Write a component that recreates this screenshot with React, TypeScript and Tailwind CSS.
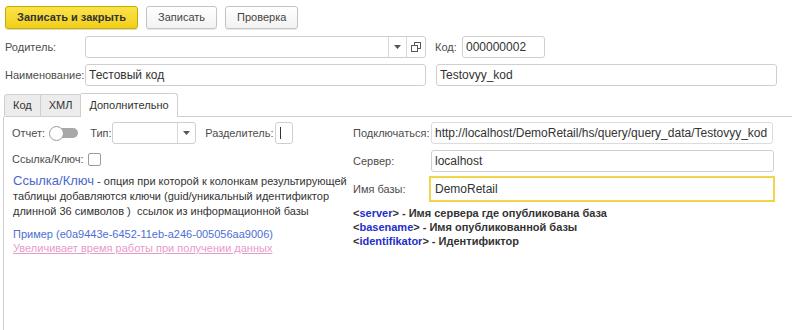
import React from 'react'

function Btn({ children, primary }: { children: React.ReactNode; primary?: boolean }) {
  return (
    <button
      className={
        primary
          ? 'h-[23px] px-[11px] rounded-[3px] border border-[#c9ab00] bg-gradient-to-b from-[#fbe34a] to-[#f1cf10] text-[11px] font-bold text-[#333] shadow-[0_1px_1px_rgba(0,0,0,0.15)]'
          : 'h-[23px] px-[11px] rounded-[3px] border border-[#c4c4c4] bg-gradient-to-b from-white to-[#f2f2f2] text-[11px] text-[#444] shadow-[0_1px_1px_rgba(0,0,0,0.1)]'
      }
    >
      {children}
    </button>
  )
}

function Field({ value, className }: { value?: string; className: string }) {
  return (
    <div
      className={`flex items-center h-[22px] px-[3px] rounded-[3px] border border-[#cfcfcf] bg-white text-[#333] whitespace-nowrap overflow-hidden ${className}`}
    >
      {value}
    </div>
  )
}

function Arrow() {
  return (
    <svg width="7" height="4" viewBox="0 0 7 4">
      <path d="M0 0h7L3.5 4z" fill="#555" />
    </svg>
  )
}

export default function App() {
  return (
    <div className="w-[792px] h-[330px] bg-white overflow-hidden font-['Liberation_Sans',Arial,sans-serif] text-[11px] text-[#333]">
      {/* toolbar */}
      <div className="flex items-center gap-[8px] pl-[5px] pt-[6px]">
        <Btn primary>Записать и закрыть</Btn>
        <Btn>Записать</Btn>
        <Btn>Проверка</Btn>
      </div>

      {/* Родитель */}
      <div className="flex items-center mt-[7px] h-[22px]">
        <span className="w-[85px] pl-[5px] text-[#4d4d4d]">Родитель:</span>
        <div className="flex w-[341px] h-[22px] rounded-[3px] border border-[#cfcfcf] bg-white">
          <div className="flex-1" />
          <div className="w-[18px] border-l border-[#d8d8d8] flex items-center justify-center">
            <Arrow />
          </div>
          <div className="w-[19px] border-l border-[#d8d8d8] flex items-center justify-center">
            <svg width="10" height="10" viewBox="0 0 10 10">
              <rect x="3.5" y="0.5" width="6" height="6" fill="none" stroke="#555" />
              <rect x="0.5" y="3.5" width="6" height="6" fill="white" stroke="#555" />
            </svg>
          </div>
        </div>
        <span className="ml-[9px] w-[27px] text-[#4d4d4d]">Код:</span>
        <Field value="000000002" className="w-[83px] h-[20px] text-[12px]" />
      </div>

      {/* Наименование */}
      <div className="flex items-center mt-[6px] h-[22px]">
        <span className="w-[85px] pl-[5px] text-[#4d4d4d]">Наименование:</span>
        <Field value="Тестовый код" className="w-[341px] text-[12px]" />
        <Field value="Testovyy_kod" className="ml-[10px] w-[341px] text-[12px]" />
      </div>

      {/* tabs */}
      <div className="flex items-end mt-[7px] pl-[4px] h-[24px]">
        <div className="h-[23px] px-[8px] flex items-center border border-[#cfcfcf] bg-[#ececec] rounded-tl-[3px]">Код</div>
        <div className="h-[23px] px-[8px] flex items-center border border-l-0 border-[#cfcfcf] bg-[#ececec]">ХМЛ</div>
        <div className="h-[24px] px-[8px] flex items-center border border-l-0 border-b-0 border-[#cfcfcf] bg-white rounded-tr-[3px]">Дополнительно</div>
        <div className="flex-1 border-b border-[#cfcfcf]" />
      </div>

      {/* panel */}
      <div className="ml-[3px] border-l border-[#cfcfcf] h-[220px] flex pt-[5px]">
        {/* left column */}
        <div className="w-[346px] pl-[8px]">
          <div className="flex items-center h-[22px]">
            <span className="text-[#4d4d4d]">Отчет:</span>
            <div className="relative ml-[4px] w-[29px] h-[15px] flex items-center">
              <div className="ml-[3px] w-[26px] h-[10px] rounded-full bg-[#a8a8a8]" />
              <div className="absolute left-0 top-0 w-[15px] h-[15px] rounded-full bg-white border border-[#9a9a9a]" />
            </div>
            <span className="ml-[12px] w-[22px] text-[#4d4d4d]">Тип:</span>
            <div className="flex w-[84px] h-[22px] rounded-[3px] border border-[#cfcfcf] bg-white">
              <div className="flex-1" />
              <div className="w-[18px] border-l border-[#d8d8d8] flex items-center justify-center">
                <Arrow />
              </div>
            </div>
            <span className="ml-[9px] w-[70px] whitespace-nowrap text-[#4d4d4d]">Разделитель:</span>
            <div className="w-[18px] h-[22px] rounded-[3px] border border-[#cfcfcf] bg-white flex items-center pl-[4px]">
              <div className="w-px h-[12px] bg-[#333]" />
            </div>
          </div>
          <div className="flex items-center h-[22px] mt-[4px]">
            <span className="text-[#4d4d4d]">Ссылка/Ключ:</span>
            <div className="ml-[4px] w-[13px] h-[13px] rounded-[2px] border border-[#9a9a9a] bg-white" />
          </div>
          <div className="mt-[3px] pl-[1px] leading-[15px] text-[#333] whitespace-nowrap">
            <div>
              <span className="inline-block leading-[15px] text-[13px] text-[#4a68cc]">Ссылка/Ключ</span> - опция при которой к колонкам результирующей
            </div>
            <div>таблицы добавляются ключи (guid/уникальный идентификтор</div>
            <div>длинной 36 символов )&nbsp; ссылок из информационной базы</div>
          </div>
          <div className="mt-[8px] pl-[1px] leading-[14px] text-[#4b6fd6]">Пример (e0a9443e-6452-11eb-a246-005056aa9006)</div>
          <div className="pl-[1px] leading-[14px] text-[#e79bc9] underline">Увеличивает время работы при получении данных</div>
        </div>

        {/* right column */}
        <div className="pl-[3px]">
          <div className="flex items-center h-[22px]">
            <span className="w-[78px] text-[#4d4d4d]">Подключаться:</span>
            <Field value="http://localhost/DemoRetail/hs/query/query_data/Testovyy_kod" className="w-[342px] h-[21px] text-[12px] border-[#dcdcdc]" />
          </div>
          <div className="flex items-center h-[22px] mt-[6px]">
            <span className="w-[78px] text-[#4d4d4d]">Сервер:</span>
            <Field value="localhost" className="w-[343px] text-[12px] border-[#a9a9a9]" />
          </div>
          <div className="flex items-center h-[26px] mt-[4px]">
            <span className="w-[76px] text-[#4d4d4d]">Имя базы:</span>
            <div className="w-[346px] h-[26px] border-2 border-[#f0d54a] flex items-center pl-[4px] text-[12px]">DemoRetail</div>
          </div>
          <div className="mt-[4px] leading-[14px] font-bold text-[#333]">
            <div>&lt;<span className="text-[#1f2fc8]">server</span>&gt; - Имя сервера где опубликована база</div>
            <div>&lt;<span className="text-[#1f2fc8]">basename</span>&gt; - Имя опубликованной базы</div>
            <div>&lt;<span className="text-[#1f2fc8]">identifikator</span>&gt; - Идентификтор</div>
          </div>
        </div>
      </div>
    </div>
  )
}
